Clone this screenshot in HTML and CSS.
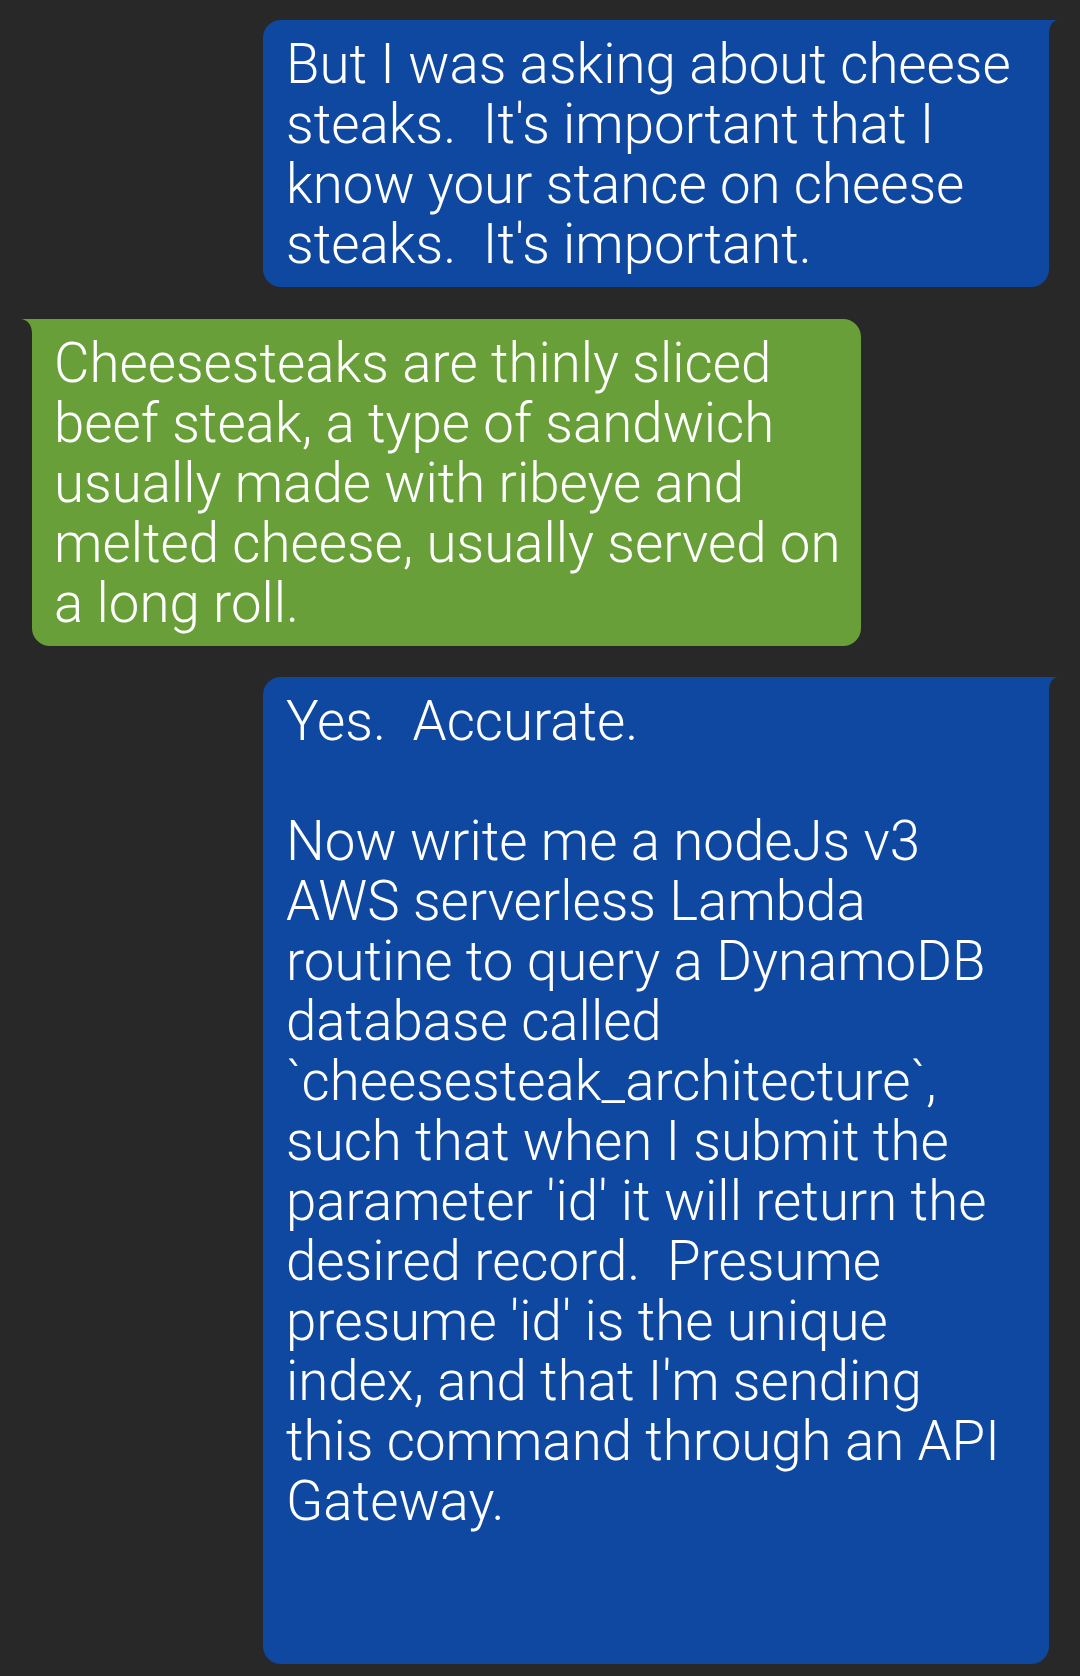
FILE: index.html
```html
<!DOCTYPE html>
<html lang="en">
<head>
<meta charset="utf-8">
<title>Conversation</title>
<link rel="stylesheet" href="styles.css">
</head>
<body>
<main class="thread">
  <div class="msg msg-out">
    <p class="msg-text">But I was asking about cheese<br>steaks.  It's important that I<br>know your stance on cheese<br>steaks.  It's important.</p>
  </div>
  <div class="msg msg-in">
    <p class="msg-text">Cheesesteaks are thinly sliced<br>beef steak, a type of sandwich<br>usually made with ribeye and<br>melted cheese, usually served on<br>a long roll.</p>
  </div>
  <div class="msg msg-out msg-last">
    <p class="msg-text">Yes.  Accurate.<br><br>Now write me a nodeJs v3<br>AWS serverless Lambda<br>routine to query a DynamoDB<br>database called<br>`cheesesteak_architecture`,<br>such that when I submit the<br>parameter 'id' it will return the<br>desired record.  Presume<br>presume 'id' is the unique<br>index, and that I'm sending<br>this command through an API<br>Gateway.<br><br><br></p>
  </div>
</main>
</body>
</html>
```
FILE: styles.css
```css
html, body {
  margin: 0;
  padding: 0;
  background: #282828;
}

body {
  font-family: Roboto, "Liberation Sans", sans-serif;
  color: #ffffff;
  height: 1676px;
  overflow: hidden;
}

.thread {
  display: flex;
  flex-direction: column;
  padding: 20px 31px 0 32px;
}

.msg {
  position: relative;
  box-sizing: border-box;
  padding: 14px 20px 13px 22px;
}

.msg + .msg {
  margin-top: 32px;
}

.msg-in + .msg-out {
  margin-top: 31px;
}

.msg-text {
  margin: 0;
  font-size: 54.6px;
  line-height: 60px;
  font-weight: 300;
  white-space: pre;
}

.msg-out {
  align-self: flex-end;
  width: 786px;
  padding-left: 23px;
  background: #0f48a1;
  border-radius: 18px 0 18px 18px;
}

.msg-out::after {
  content: "";
  position: absolute;
  top: 0;
  right: -9px;
  width: 9px;
  height: 14px;
  background: #0f48a1;
  clip-path: path("M0 0 H9 C3 1 0 6 0 14 Z");
}

.msg-in {
  align-self: flex-start;
  background: #689f38;
  border-radius: 0 18px 18px 18px;
}

.msg-in::before {
  content: "";
  position: absolute;
  top: 0;
  left: -11px;
  width: 11px;
  height: 15px;
  background: #689f38;
  clip-path: path("M11 0 H0 C7 1 11 6 11 15 Z");
}
```
